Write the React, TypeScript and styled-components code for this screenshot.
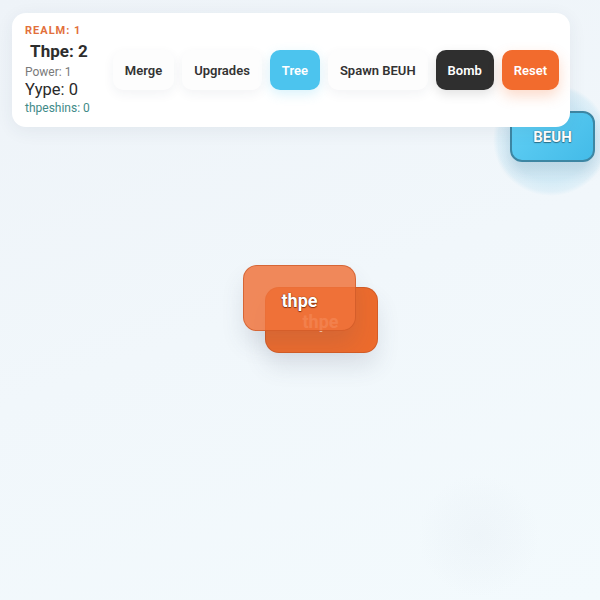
import React from "react";
import styled, { createGlobalStyle } from "styled-components";

const Global = createGlobalStyle`
  html, body { margin: 0; padding: 0; }
  body { font-family: Roboto, "Noto Sans", "Liberation Sans", sans-serif; }
`;

const Stage = styled.div`
  position: relative;
  width: 600px;
  height: 600px;
  overflow: hidden;
  background: linear-gradient(160deg, #eef3f8 0%, #f1f7fb 50%, #f3fafd 100%);
  padding: 13px 0 0 12px;
  box-sizing: border-box;
`;

const Hud = styled.div`
  position: relative;
  z-index: 5;
  display: inline-flex;
  align-items: center;
  gap: 23px;
  width: 558px;
  box-sizing: border-box;
  padding: 11px 12px 11px 13px;
  background: #ffffff;
  border-radius: 14px;
  box-shadow: 0 4px 18px rgba(40, 60, 90, 0.07);
`;

const Stats = styled.div`
  display: flex;
  flex-direction: column;
  width: 66px;
`;

const Realm = styled.div`
  color: #e2703c;
  font-size: 11px;
  font-weight: 700;
  letter-spacing: 1px;
  line-height: 13px;
  white-space: nowrap;
`;

const Title = styled.div`
  color: #2d2d2d;
  font-size: 17px;
  font-weight: 700;
  line-height: 22px;
  margin-top: 3px;
  padding-left: 3px;
  text-align: center;
  white-space: nowrap;
`;

const Line = styled.div<{ $tone: "muted" | "big" | "teal" }>`
  white-space: nowrap;
  color: ${(p) => (p.$tone === "muted" ? "#7a7a7a" : p.$tone === "teal" ? "#3f8a88" : "#2a2a2a")};
  font-size: ${(p) => (p.$tone === "big" ? "16.5px" : "12px")};
  line-height: ${(p) => (p.$tone === "big" ? "20px" : "16px")};
  margin-top: ${(p) => (p.$tone === "muted" ? "2px" : "0")};
`;

const Buttons = styled.div`
  display: flex;
  align-items: center;
  gap: 8px;
`;

const variants = {
  plain: { bg: "#fdfdfd", fg: "#333333", shadow: "0 4px 12px rgba(30,50,80,0.06)" },
  tree: { bg: "#4cc4ee", fg: "#ffffff", shadow: "0 4px 12px rgba(76,196,238,0.22)" },
  dark: { bg: "#2f2f2f", fg: "#ffffff", shadow: "0 4px 12px rgba(0,0,0,0.12)" },
  reset: { bg: "#f26b2d", fg: "#ffffff", shadow: "0 6px 14px rgba(242,107,45,0.25)" },
};

const Btn = styled.button<{ $v: keyof typeof variants }>`
  height: 40px;
  padding: 0 12px;
  border: none;
  border-radius: 10px;
  font-family: Roboto, "Liberation Sans", sans-serif;
  font-size: 13px;
  font-weight: 600;
  white-space: nowrap;
  background: ${(p) => variants[p.$v].bg};
  color: ${(p) => variants[p.$v].fg};
  box-shadow: ${(p) => variants[p.$v].shadow};
`;

const Glow = styled.div`
  position: absolute;
  left: 493px;
  top: 84px;
  width: 116px;
  height: 112px;
  border-radius: 50%;
  background: radial-gradient(closest-side, rgba(76, 180, 225, 0.2) 0%, rgba(76, 180, 225, 0.18) 72%, rgba(76, 180, 225, 0.1) 92%, rgba(76, 180, 225, 0) 100%);
`;

const Beuh = styled.div`
  position: absolute;
  left: 510px;
  top: 111px;
  width: 85px;
  height: 51px;
  box-sizing: border-box;
  border: 2px solid #3d86a3;
  border-radius: 12px;
  background: linear-gradient(135deg, #62d0f5 0%, #43bbe8 100%);
  box-shadow: 0 9px 14px rgba(40, 80, 110, 0.13);
  display: flex;
  align-items: center;
  justify-content: center;
  color: #ffffff;
  font-size: 15px;
  font-weight: 700;
  text-shadow: 0 0 1px #2c6f88, 0 0 1px #2c6f88, 0 1px 1px #2c6f88;
`;

const Card = styled.div<{ $x: number; $y: number; $top?: boolean }>`
  position: absolute;
  left: ${(p) => p.$x}px;
  top: ${(p) => p.$y}px;
  width: 113px;
  height: 66px;
  box-sizing: border-box;
  border-radius: 14px;
  border: 1px solid rgba(200, 85, 35, 0.65);
  background: ${(p) => (p.$top ? "rgba(240, 114, 58, 0.84)" : "#ec6b2d")};
  box-shadow: 0 14px 22px rgba(70, 80, 100, 0.13);
  display: flex;
  align-items: center;
  justify-content: center;
  font-size: 18px;
  font-weight: 700;
  color: ${(p) => (p.$top ? "#ffffff" : "#ffc7a6")};
  text-shadow: ${(p) => (p.$top ? "0 0 1px #8a3510, 0 0 1px #8a3510, 0 1px 1px #8a3510" : "none")};
  z-index: ${(p) => (p.$top ? 2 : 1)};
`;

const CardLabel = styled.span<{ $dx: number; $dy: number }>`
  position: relative;
  left: ${(p) => p.$dx}px;
  top: ${(p) => p.$dy}px;
`;

const Ghost = styled.div`
  position: absolute;
  left: 418px;
  top: 475px;
  width: 122px;
  height: 122px;
  border-radius: 50%;
  background: radial-gradient(closest-side, rgba(205, 212, 225, 0.12) 0%, rgba(205, 212, 225, 0.06) 60%, rgba(205, 212, 225, 0) 100%);
`;

export default function App() {
  return (
    <>
      <Global />
      <Stage>
        <Glow />
        <Beuh>BEUH</Beuh>
        <Ghost />
        <Card $x={265} $y={287}>
          <CardLabel $dx={-1} $dy={1}>thpe</CardLabel>
        </Card>
        <Card $x={243} $y={265} $top>
          <CardLabel $dx={0} $dy={2}>thpe</CardLabel>
        </Card>
        <Hud>
          <Stats>
            <Realm>REALM: 1</Realm>
            <Title>Thpe: 2</Title>
            <Line $tone="muted">Power: 1</Line>
            <Line $tone="big">Yype: 0</Line>
            <Line $tone="teal">thpeshins: 0</Line>
          </Stats>
          <Buttons>
            <Btn $v="plain">Merge</Btn>
            <Btn $v="plain">Upgrades</Btn>
            <Btn $v="tree">Tree</Btn>
            <Btn $v="plain">Spawn BEUH</Btn>
            <Btn $v="dark">Bomb</Btn>
            <Btn $v="reset">Reset</Btn>
          </Buttons>
        </Hud>
      </Stage>
    </>
  );
}
